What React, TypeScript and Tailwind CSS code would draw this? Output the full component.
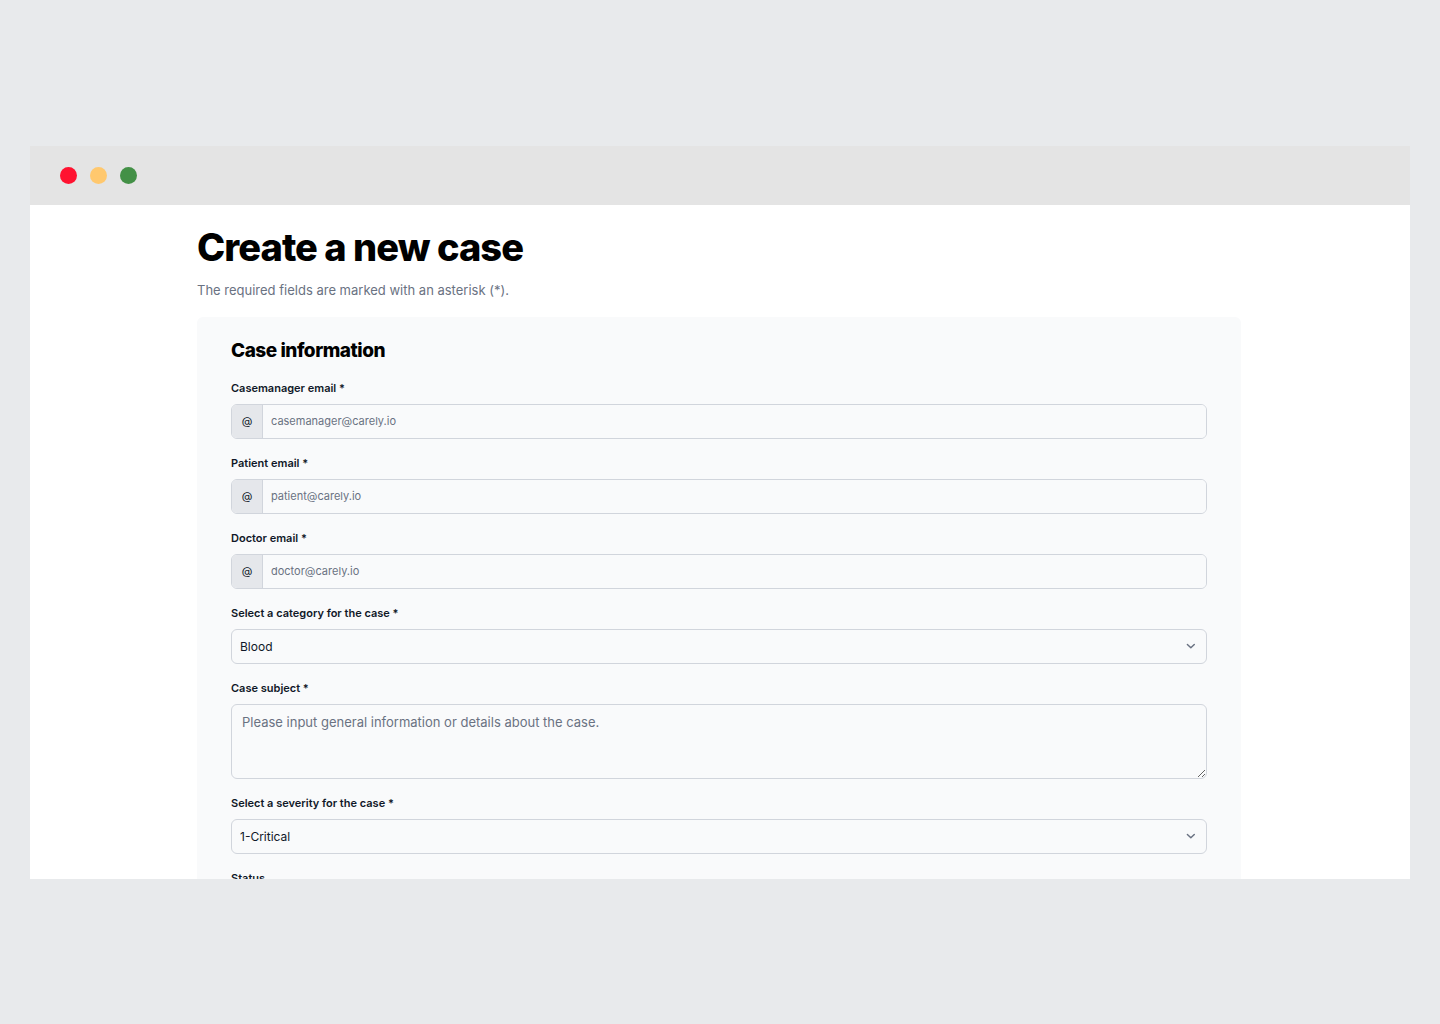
import type { ReactNode } from 'react';

function Field({ id, label, children }: { id: string; label: string; children: ReactNode }) {
  return (
    <div className="flex flex-col">
      <label htmlFor={id} className="mb-2 text-[11px] leading-4 font-semibold text-gray-900">
        {label}
      </label>
      {children}
    </div>
  );
}

function EmailField({ id, label, placeholder }: { id: string; label: string; placeholder: string }) {
  return (
    <Field id={id} label={label}>
      <div className="flex h-[35px] overflow-hidden rounded-md border border-gray-300">
        <span className="flex w-[31px] shrink-0 items-center justify-center border-r border-gray-300 bg-gray-200 text-[11px] text-gray-900">
          @
        </span>
        <input
          id={id}
          type="email"
          placeholder={placeholder}
          className="min-w-0 flex-1 bg-gray-50 px-2 text-[11px] text-gray-900 placeholder:text-gray-500"
        />
      </div>
    </Field>
  );
}

function SelectField({ id, label, options }: { id: string; label: string; options: string[] }) {
  return (
    <Field id={id} label={label}>
      <div className="relative">
        <select
          id={id}
          className="block h-[35px] w-full appearance-none rounded-md border border-gray-300 bg-gray-50 px-2 text-[12px] text-gray-900"
        >
          {options.map((o) => (
            <option key={o}>{o}</option>
          ))}
        </select>
        <svg
          viewBox="0 0 20 20"
          fill="none"
          stroke="currentColor"
          strokeWidth="1.8"
          strokeLinecap="round"
          strokeLinejoin="round"
          className="pointer-events-none absolute top-[9px] right-2 size-4 text-gray-500"
        >
          <path d="M5.500 8l4.300 4.300L14.100 8" />
        </svg>
      </div>
    </Field>
  );
}

export default function App() {
  return (
    <div className="flex h-screen flex-col bg-[#e8eaec] px-[30px] pt-[146px] pb-[145px] font-['Inter',sans-serif]">
      <div className="flex h-[59px] shrink-0 items-center gap-[13px] bg-[#e4e4e4] px-[30px]">
        <span className="size-[17px] rounded-full bg-[#ff1230]" />
        <span className="size-[17px] rounded-full bg-[#ffc86e]" />
        <span className="size-[17px] rounded-full bg-[#439046]" />
      </div>
      <main className="min-h-0 flex-1 overflow-hidden bg-white pr-[169px] pl-[167px]">
        <h1 className="pt-[18px] text-[38px] leading-[48px] font-extrabold tracking-tight text-black">
          Create a new case
        </h1>
        <p className="mt-[7px] text-[13px] leading-6 text-gray-500">
          The required fields are marked with an asterisk (*).
        </p>
        <form className="mt-[15px] flex flex-col gap-4 rounded-md bg-gray-50 px-[34px] pt-[21px] pb-8">
          <h2 className="text-[19px] leading-[26px] font-extrabold tracking-tight text-black">Case information</h2>
          <EmailField id="manager" label="Casemanager email *" placeholder="casemanager@carely.io" />
          <EmailField id="patient" label="Patient email *" placeholder="patient@carely.io" />
          <EmailField id="doctor" label="Doctor email *" placeholder="doctor@carely.io" />
          <SelectField id="category" label="Select a category for the case *" options={['Blood']} />
          <Field id="subject" label="Case subject *">
            <textarea
              id="subject"
              placeholder="Please input general information or details about the case."
              className="block h-[75px] w-full resize-y rounded-md border border-gray-300 bg-gray-50 px-[10px] py-[7px] text-[13px] leading-5 placeholder:text-gray-500"
            />
          </Field>
          <SelectField id="severity" label="Select a severity for the case *" options={['1-Critical']} />
          <SelectField id="status" label="Status" options={['Open']} />
        </form>
      </main>
    </div>
  );
}
